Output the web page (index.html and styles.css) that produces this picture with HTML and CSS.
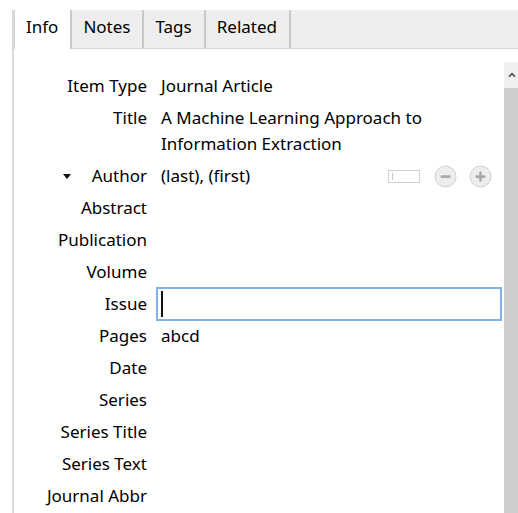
FILE: index.html
```html
<!DOCTYPE html>
<html lang="en">
<head>
<meta charset="utf-8">
<title>Item Pane</title>
<link rel="stylesheet" href="styles.css">
</head>
<body>
<div class="pane">
  <div class="tabs">
    <div class="tab active">Info</div>
    <div class="tab">Notes</div>
    <div class="tab">Tags</div>
    <div class="tab">Related</div>
  </div>
  <div class="body">
    <div class="fields">
      <div class="label">Item Type</div>
      <div class="value">Journal Article</div>

      <div class="label">Title</div>
      <div class="value">A Machine Learning Approach to Information Extraction</div>

      <div class="label creator"><span class="twisty"></span><span>Author</span></div>
      <div class="value creator-value">
        <span class="creator-name">(last), (first)</span>
        <span class="mode-box"><span class="mode-tick"></span></span>
        <svg class="round-btn" width="23" height="23" viewBox="0 0 23 23">
          <circle cx="11.5" cy="11.5" r="10.5" fill="#ededed" stroke="#d2d2d2"/>
          <rect x="6.5" y="10.3" width="10" height="2.6" rx="1" fill="#a9a9a9"/>
        </svg>
        <svg class="round-btn" width="23" height="23" viewBox="0 0 23 23">
          <circle cx="11.5" cy="11.5" r="10.5" fill="#ededed" stroke="#d2d2d2"/>
          <rect x="6.5" y="10.3" width="10" height="2.6" rx="1" fill="#a9a9a9"/>
          <rect x="10.2" y="6.6" width="2.6" height="10" rx="1" fill="#a9a9a9"/>
        </svg>
      </div>

      <div class="label">Abstract</div>
      <div class="value"></div>

      <div class="label">Publication</div>
      <div class="value"></div>

      <div class="label">Volume</div>
      <div class="value"></div>

      <div class="label">Issue</div>
      <div class="value editing"><span class="caret"></span></div>

      <div class="label">Pages</div>
      <div class="value">abcd</div>

      <div class="label">Date</div>
      <div class="value"></div>

      <div class="label">Series</div>
      <div class="value"></div>

      <div class="label">Series Title</div>
      <div class="value"></div>

      <div class="label">Series Text</div>
      <div class="value"></div>

      <div class="label">Journal Abbr</div>
      <div class="value"></div>
    </div>
    <div class="scrollbar">
      <div class="scroll-up">
        <svg width="14" height="10" viewBox="0 0 14 10">
          <polyline points="3.5,7 7,3.5 10.5,7" fill="none" stroke="#555" stroke-width="2"/>
        </svg>
      </div>
      <div class="thumb"></div>
    </div>
  </div>
</div>
</body>
</html>
```

FILE: styles.css
```css
html, body {
  margin: 0;
  height: 100%;
  background: #fff;
  overflow: hidden;
}

body {
  font-family: "Noto Sans", "Open Sans", sans-serif;
  font-size: 17px;
  color: #000;
}

.pane {
  margin: 10px 0 0 12px;
  height: 503px;
  border-left: 2px solid #dadada;
  display: flex;
  flex-direction: column;
}

/* tab strip */
.tabs {
  display: flex;
  height: 39px;
  box-sizing: border-box;
  background: #eeeeee;
  border-bottom: 1px solid #d6d6d6;
}

.tab {
  height: 38px;
  line-height: 34px;
  padding: 0 12px 0 11px;
  border-right: 2px solid #c9c9c9;
}

.tab.active {
  height: 39px;
  background: #fff;
  border-left: 1px solid #d2d2d2;
}

/* field list */
.body {
  flex: 1;
  margin-top: 13px;
  display: flex;
  min-height: 0;
}

.fields {
  flex: 1;
  padding: 8px 2px 0 0;
  display: grid;
  grid-template-columns: 133px 1fr;
  grid-auto-rows: min-content;
  column-gap: 11px;
  align-content: start;
}

.label,
.value {
  line-height: 26px;
  padding: 3px 0;
  min-height: 26px;
}

.label {
  text-align: right;
}

.value {
  padding-left: 3px;
}

.creator {
  display: flex;
  justify-content: flex-end;
  align-items: center;
}

.twisty {
  width: 0;
  height: 0;
  border-left: 4px solid transparent;
  border-right: 4px solid transparent;
  border-top: 5px solid #111;
  margin-right: 21px;
  margin-top: 1px;
}

.creator-value {
  display: flex;
  align-items: center;
  padding-right: 10px;
}

.creator-name {
  flex: 1;
}

.mode-box {
  width: 30px;
  height: 11px;
  border: 1px solid #d0d0d0;
  margin-right: 14px;
  display: flex;
  align-items: center;
}

.mode-tick {
  width: 1px;
  height: 7px;
  margin-left: 3px;
  background: #c8c8c8;
}

.round-btn {
  display: block;
}

.round-btn + .round-btn {
  margin-left: 12px;
}

.value.editing {
  padding: 0;
  margin: -1px 0 -1px -2px;
  height: 34px;
  box-sizing: border-box;
  border: 2px solid #80b3e6;
  display: flex;
  align-items: center;
}

.caret {
  width: 2px;
  height: 26px;
  margin-left: 3px;
  background: #111;
}

/* vertical scrollbar */
.scrollbar {
  width: 14px;
  display: flex;
  flex-direction: column;
}

.scroll-up {
  height: 26px;
  background: #f0f0f0;
  display: flex;
  align-items: center;
  justify-content: center;
}

.scroll-up svg {
  display: block;
  margin-left: 2px;
}

.thumb {
  flex: 1;
  background: #cdcdcd;
}
```
